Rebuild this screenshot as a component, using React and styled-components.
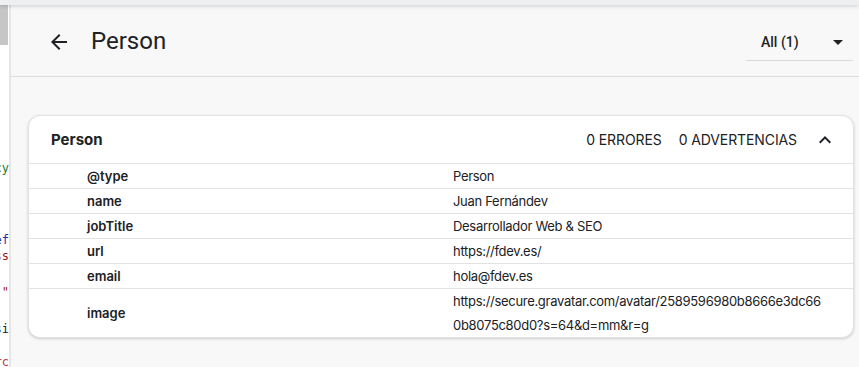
import React from "react";
import styled, { createGlobalStyle } from "styled-components";

const GlobalStyle = createGlobalStyle`
  html, body {
    margin: 0;
    padding: 0;
    width: 859px;
    height: 367px;
    overflow: hidden;
    background: #f8f8f8;
  }
  * {
    box-sizing: border-box;
  }
`;

const codeLines = [
  { top: 160, text: "policy", color: "#1e7a1e" },
  { top: 232, text: "href", color: "#1c2fa8" },
  { top: 248, text: "class", color: "#a31515" },
  { top: 284, text: 'url:"', color: "#a31515" },
  { top: 321, text: "posi", color: "#222" },
  { top: 354, text: "src", color: "#c0392b" },
];

const rows = [
  { key: "@type", value: "Person" },
  { key: "name", value: "Juan Fernándev" },
  { key: "jobTitle", value: "Desarrollador Web & SEO" },
  { key: "url", value: "https://fdev.es/" },
  { key: "email", value: "hola@fdev.es" },
  {
    key: "image",
    value: "https://secure.gravatar.com/avatar/2589596980b8666e3dc660b8075c80d0?s=64&d=mm&r=g",
  },
];

const ArrowBack = () => (
  <svg width="24" height="24" viewBox="0 0 24 24" fill="#202124">
    <path d="M20 11H7.83l5.59-5.59L12 4l-8 8 8 8 1.41-1.41L7.83 13H20v-2z" />
  </svg>
);

const Caret = () => (
  <svg width="24" height="24" viewBox="0 0 24 24" fill="#202124">
    <path d="M7 10l5 5 5-5z" />
  </svg>
);

const ChevronUp = () => (
  <svg width="24" height="24" viewBox="0 0 24 24" fill="#202124">
    <path d="M12 8l-6 6 1.41 1.41L12 10.83l4.59 4.58L18 14z" />
  </svg>
);

const App = () => {
  return (
    <>
      <GlobalStyle />
      <Page>
        <TopStrip />
        <Main>
          <CodeStrip>
            <Scrollbar />
            {codeLines.map((line) => (
              <CodeLine key={line.top} $top={line.top} $color={line.color}>
                {line.text}
              </CodeLine>
            ))}
          </CodeStrip>
          <Panel>
            <Header>
              <BackButton>
                <ArrowBack />
              </BackButton>
              <Title>Person</Title>
              <Select>
                <SelectLabel>All (1)</SelectLabel>
                <Caret />
              </Select>
            </Header>
            <Content>
              <Card>
                <CardHeader>
                  <CardTitle>Person</CardTitle>
                  <Counts>
                    <Count>0 ERRORES</Count>
                    <Count>0 ADVERTENCIAS</Count>
                  </Counts>
                  <ToggleButton>
                    <ChevronUp />
                  </ToggleButton>
                </CardHeader>
                {rows.map((row) => (
                  <Row key={row.key}>
                    <Key>{row.key}</Key>
                    <Value>{row.value}</Value>
                  </Row>
                ))}
              </Card>
            </Content>
          </Panel>
        </Main>
      </Page>
    </>
  );
};

const Page = styled.div`
  display: flex;
  flex-direction: column;
  width: 859px;
  height: 367px;
  font-family: Inter, "Noto Sans", sans-serif;
  color: #202124;
`;

const TopStrip = styled.div`
  height: 5px;
  flex-shrink: 0;
  background: #eeeff1;
  box-shadow: 0 1px 4px rgba(0, 0, 0, 0.18);
  position: relative;
  z-index: 2;
`;

const Main = styled.div`
  display: flex;
  flex: 1;
  min-height: 0;
`;

const CodeStrip = styled.div`
  position: relative;
  width: 11px;
  flex-shrink: 0;
  background: #fff;
  overflow: hidden;
  border-right: 2px solid #e6e6e6;
`;

const Scrollbar = styled.div`
  width: 8px;
  height: 40px;
  background: #c6c6c6;
`;

const CodeLine = styled.div`
  position: absolute;
  top: ${(p) => p.$top - 5}px;
  right: 0;
  white-space: nowrap;
  font-family: "DejaVu Sans Mono", monospace;
  font-size: 12px;
  line-height: 16px;
  color: ${(p) => p.$color};
`;

const Panel = styled.div`
  flex: 1;
  display: flex;
  flex-direction: column;
  background: #f8f8f8;
`;

const Header = styled.div`
  height: 72px;
  flex-shrink: 0;
  display: flex;
  align-items: center;
  padding: 0 6px 0 36px;
  border-bottom: 1px solid #dcdcdc;
`;

const BackButton = styled.div`
  display: flex;
  align-items: center;
  margin-top: 2px;
`;

const Title = styled.h1`
  margin: 0 0 0 20px;
  flex: 1;
  font-family: Roboto, "Liberation Sans", sans-serif;
  font-size: 24px;
  font-weight: 400;
  color: #202124;
`;

const Select = styled.div`
  width: 107px;
  height: 36px;
  margin-top: 4px;
  display: flex;
  align-items: center;
  justify-content: space-between;
  padding: 0 3px 0 15px;
  border-bottom: 1px solid #dadada;
`;

const SelectLabel = styled.span`
  font-family: Roboto, "Liberation Sans", sans-serif;
  font-size: 14px;
  font-weight: 500;
`;

const Content = styled.div`
  padding: 38px 5px 0 17px;
`;

const Card = styled.div`
  background: #fff;
  border: 1px solid #e2e2e2;
  border-radius: 12px;
  box-shadow: 0 1px 3px rgba(0, 0, 0, 0.18);
  overflow: hidden;
`;

const CardHeader = styled.div`
  height: 47px;
  display: flex;
  align-items: center;
  padding: 0 16px 0 22px;
`;

const CardTitle = styled.div`
  flex: 1;
  font-size: 15px;
  font-weight: 700;
`;

const Counts = styled.div`
  display: flex;
  gap: 17px;
  margin-right: 16px;
`;

const Count = styled.span`
  font-size: 14px;
  letter-spacing: -0.1px;
`;

const ToggleButton = styled.div`
  display: flex;
  align-items: center;
`;

const Row = styled.div`
  display: grid;
  grid-template-columns: 424px 1fr;
  align-items: center;
  min-height: 25px;
  border-top: 1px solid #e2e2e2;
  font-size: 13px;
  line-height: 24px;
`;

const Key = styled.div`
  padding-left: 58px;
  font-weight: 600;
`;

const Value = styled.div`
  padding-right: 29px;
  letter-spacing: -0.3px;
  word-break: break-all;
`;

export default App;
